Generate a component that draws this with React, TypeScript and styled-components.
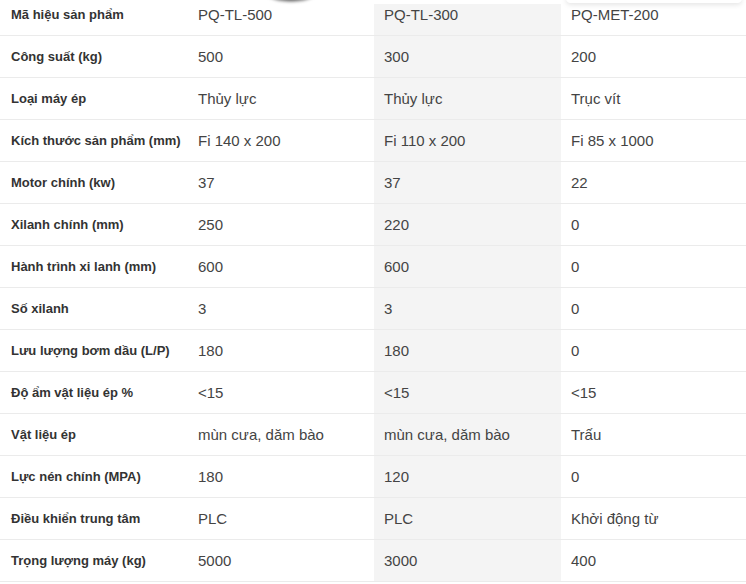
import React from "react";
import styled, { createGlobalStyle } from "styled-components";

const GlobalStyle = createGlobalStyle`
  html, body { margin: 0; padding: 0; background: #ffffff; }
  body { font-family: "Liberation Sans", Arial, sans-serif; overflow: hidden; }
`;

const Page = styled.div`
  position: relative;
  width: 746px;
  height: 584px;
  overflow: hidden;
  background: #ffffff;
`;

const TopCover = styled.div`
  position: absolute;
  left: 0;
  top: 0;
  width: 746px;
  height: 4px;
  background: #ffffff;
  z-index: 2;
`;

const CoverShadow = styled.div`
  position: absolute;
  left: 566px;
  top: -6px;
  width: 176px;
  height: 9px;
  background: #ffffff;
  border-radius: 6px;
  box-shadow: 0 2px 5px rgba(0, 0, 0, 0.1);
  z-index: 3;
`;

const DarkBlob = styled.div`
  position: absolute;
  left: 266px;
  top: -17px;
  width: 50px;
  height: 19px;
  border-radius: 50%;
  background: radial-gradient(ellipse at center, #3a3a3a 0%, #555 45%, rgba(120,120,120,0.5) 75%, rgba(255,255,255,0) 100%);
  filter: blur(1.5px);
  z-index: 4;
`;

const Table = styled.table`
  width: 746px;
  margin-top: -7px;
  border-collapse: collapse;
  table-layout: fixed;
`;

const Col = styled.col<{ $w: number }>`
  width: ${(p) => p.$w}px;
`;

const Row = styled.tr`
  height: 42px;
  border-bottom: 1px solid #ebebeb;
`;

const Cell = styled.td<{ $head?: boolean; $shade?: boolean }>`
  height: 41px;
  padding: 1px 0 0 ${(p) => (p.$head ? "11px" : "10px")};
  box-sizing: border-box;
  vertical-align: middle;
  font-family: "Liberation Sans", Arial, sans-serif;
  font-size: ${(p) => (p.$head ? "13px" : "15px")};
  font-weight: ${(p) => (p.$head ? 700 : 400)};
  color: ${(p) => (p.$head ? "#333333" : "#444444")};
  background: ${(p) => (p.$shade ? "#f4f4f4" : "transparent")};
  white-space: nowrap;
`;

const rows: [string, string, string, string][] = [
  ["Mã hiệu sản phẩm", "PQ-TL-500", "PQ-TL-300", "PQ-MET-200"],
  ["Công suất (kg)", "500", "300", "200"],
  ["Loại máy ép", "Thủy lực", "Thủy lực", "Trục vít"],
  ["Kích thước sản phẩm (mm)", "Fi 140 x 200", "Fi 110 x 200", "Fi 85 x 1000"],
  ["Motor chính (kw)", "37", "37", "22"],
  ["Xilanh chính (mm)", "250", "220", "0"],
  ["Hành trình xi lanh (mm)", "600", "600", "0"],
  ["Số xilanh", "3", "3", "0"],
  ["Lưu lượng bơm dầu (L/P)", "180", "180", "0"],
  ["Độ ẩm vật liệu ép %", "<15", "<15", "<15"],
  ["Vật liệu ép", "mùn cưa, dăm bào", "mùn cưa, dăm bào", "Trấu"],
  ["Lực nén chính (MPA)", "180", "120", "0"],
  ["Điều khiển trung tâm", "PLC", "PLC", "Khởi động từ"],
  ["Trọng lượng máy (kg)", "5000", "3000", "400"],
];

export default function App() {
  return (
    <Page>
      <GlobalStyle />
      <TopCover />
      <CoverShadow />
      <DarkBlob />
      <Table>
        <colgroup>
          <Col $w={188} />
          <Col $w={186} />
          <Col $w={187} />
          <Col $w={185} />
        </colgroup>
        <tbody>
          {rows.map((r) => (
            <Row key={r[0]}>
              <Cell $head>{r[0]}</Cell>
              <Cell>{r[1]}</Cell>
              <Cell $shade>{r[2]}</Cell>
              <Cell>{r[3]}</Cell>
            </Row>
          ))}
        </tbody>
      </Table>
    </Page>
  );
}
